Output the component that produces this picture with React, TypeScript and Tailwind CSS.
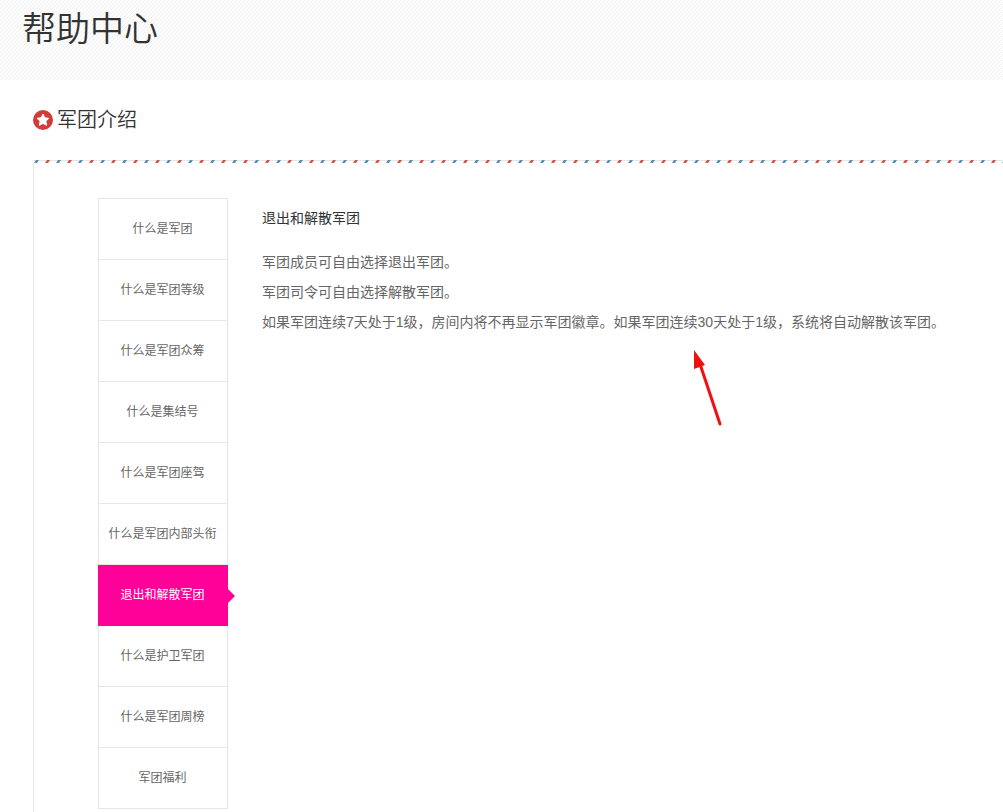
import React, { useState } from "react";

const topics = [
  "什么是军团",
  "什么是军团等级",
  "什么是军团众筹",
  "什么是集结号",
  "什么是军团座驾",
  "什么是军团内部头衔",
  "退出和解散军团",
  "什么是护卫军团",
  "什么是军团周榜",
  "军团福利",
];

function StarBadge() {
  return (
    <svg width="20" height="20" viewBox="0 0 20 20" className="shrink-0" aria-hidden="true">
      <circle cx="10" cy="10" r="10" fill="#d13c38" />
      <path
        d="M10 4l1.800 3.800 4.100.5-3 2.900.7 4.100-3.600-1.900-3.600 1.900.7-4.100-3-2.900 4.100-.5z"
        fill="#fff"
        stroke="#fff"
        strokeWidth="1"
        strokeLinejoin="round"
      />
    </svg>
  );
}

function AirmailStripe() {
  return (
    <svg className="block w-full h-[3px]" aria-hidden="true">
      <defs>
        <pattern id="airmail" width="22" height="3" patternUnits="userSpaceOnUse">
          <path d="M1 3L3 0H6L4 3z" fill="#5b8fa8" />
          <path d="M12 3L14 0H17L15 3z" fill="#cf5350" />
        </pattern>
      </defs>
      <rect width="100%" height="1" fill="#e6e6e6" />
      <rect width="100%" height="3" fill="url(#airmail)" />
    </svg>
  );
}

export default function HelpCenter() {
  const [active, setActive] = useState(6);

  return (
    <div className="min-h-screen flex flex-col bg-white text-[#666] font-['Liberation_Sans','Noto_Sans_CJK_SC',sans-serif]">
      <header className="h-20 px-[22px] pt-1 bg-[linear-gradient(135deg,#f0f0f0_12.5%,#fefefe_12.5%,#fefefe_50%,#f0f0f0_50%,#f0f0f0_62.5%,#fefefe_62.5%)] bg-size-[4px_4px]">
        <h1 className="text-[34px] leading-[50px] font-[350] text-[#333]">帮助中心</h1>
      </header>

      <main className="flex-1 flex flex-col pl-[33px]">
        <div className="h-20 flex items-center gap-1">
          <StarBadge />
          <h2 className="text-xl leading-[30px] font-[350] text-[#333]">军团介绍</h2>
        </div>

        <section className="flex-1 flex flex-col">
          <AirmailStripe />
          <div className="flex-1 flex items-start gap-[34px] border-l border-[#e6e6e6] pl-16 pt-[35px]">
            <nav className="w-[130px] shrink-0 border-t border-[#e6e6e6]">
              {topics.map((topic, i) => (
                <button
                  key={topic}
                  type="button"
                  onClick={() => setActive(i)}
                  className={
                    i === active
                      ? "relative block w-full h-[61px] pr-px text-xs text-white bg-[#ff0099] border-b border-[#ff0099] cursor-pointer"
                      : "block w-full h-[61px] pr-px text-xs border-x border-b border-[#e6e6e6] cursor-pointer"
                  }
                >
                  {topic}
                  {i === active && (
                    <span className="absolute left-full top-6 border-y-[7px] border-l-[7px] border-y-transparent border-l-[#ff0099]" />
                  )}
                </button>
              ))}
            </nav>

            <article className="relative flex-1 pt-[5px] text-sm">
              <h3 className="leading-[30px] text-[#333] mb-[14px]">{topics[active]}</h3>
              <p className="leading-[30px]">军团成员可自由选择退出军团。</p>
              <p className="leading-[30px]">军团司令可自由选择解散军团。</p>
              <p className="leading-[30px]">
                如果军团连续7天处于1级，房间内将不再显示军团徽章。如果军团连续30天处于1级，系统将自动解散该军团。
              </p>
              <svg
                className="absolute left-[430px] top-[152px]"
                width="30"
                height="76"
                viewBox="0 0 30 76"
                aria-hidden="true"
              >
                <path d="M8 14L28 74" stroke="#f01010" strokeWidth="3" strokeLinecap="round" />
                <path d="M2 0L13 15L2 19z" fill="#f01010" />
              </svg>
            </article>
          </div>
        </section>
      </main>
    </div>
  );
}
